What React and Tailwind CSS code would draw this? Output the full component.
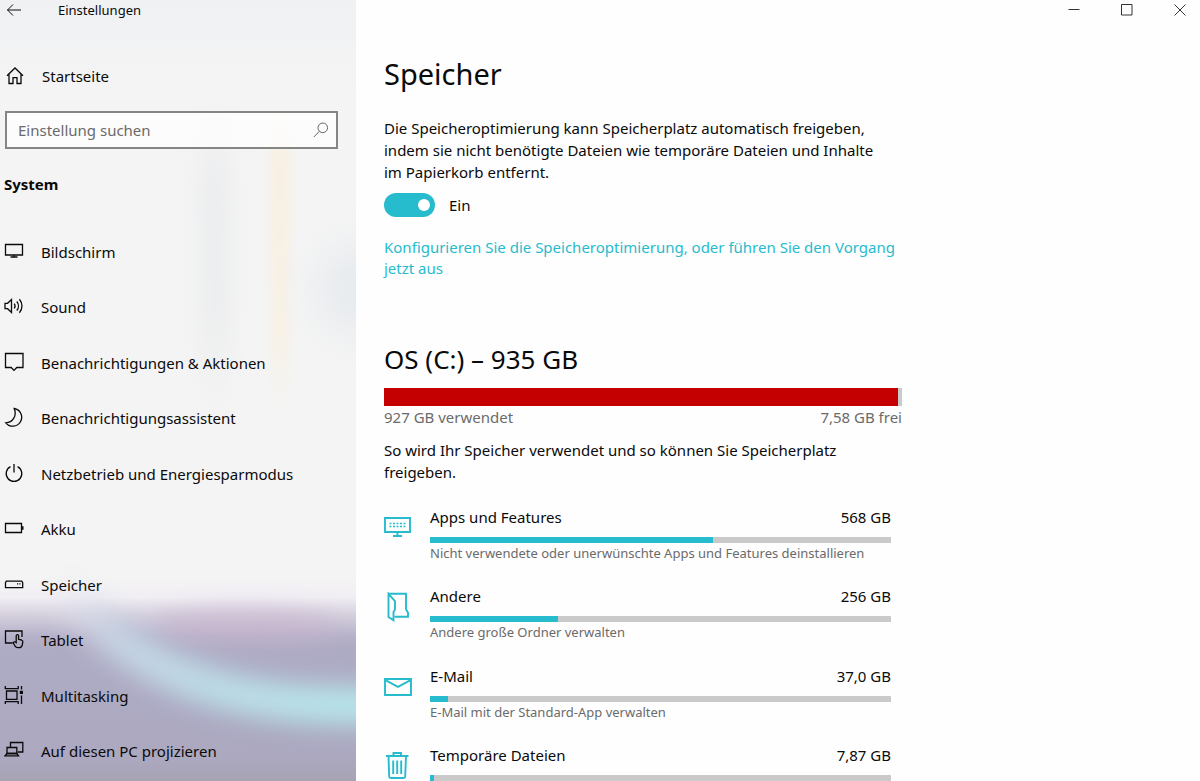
import React from "react";

const line = { fill: "none", stroke: "currentColor", strokeWidth: 1.3 };

function Glyph({ children }) {
  return (
    <svg viewBox="0 0 20 20" className="h-5 w-5 shrink-0" aria-hidden="true" {...line}>
      {children}
    </svg>
  );
}

const navItems = [
  {
    label: "Bildschirm",
    icon: <path d="M1.5 3.500h17v10.500h-17zM10 14v2M6.500 16h7" />,
  },
  {
    label: "Sound",
    icon: (
      <>
        <path d="M1 7.3h2.6L7.5 3.5v13L3.6 12.7H1z" />
        <path d="M10.2 7.600a4 4 0 0 1 0 4.800M12.800 5.500a7 7 0 0 1 0 9M15.400 3.200a10.300 10.300 0 0 1 0 13.600" />
      </>
    ),
  },
  {
    label: "Benachrichtigungen & Aktionen",
    icon: <path d="M1.500 1.500h17.500v14h-6.200l-2.800 2.900-2.800-2.900H1.500z" />,
  },
  {
    label: "Benachrichtigungsassistent",
    icon: <path d="M10.200 1.500a8.900 8.900 0 1 1-8.400 14.300C8.500 15.700 13.300 9 10.200 1.500z" />,
  },
  {
    label: "Netzbetrieb und Energiesparmodus",
    icon: <path d="M10 1v8.500M6.500 3.600a7.800 7.800 0 1 0 7 0" />,
  },
  {
    label: "Akku",
    icon: (
      <>
        <path d="M1.500 5.500h16v9h-16z" />
        <path d="M18.600 8.200v3.600" strokeWidth="1.800" />
      </>
    ),
  },
  {
    label: "Speicher",
    icon: (
      <>
        <path d="M2.300 7.200h15.500l.9 1.400v5H1.500v-5z" />
        <path d="M13 9.800h1.200M15.300 9.800h1.200" />
      </>
    ),
  },
  {
    label: "Tablet",
    icon: (
      <>
        <path d="M8.500 14h-7V2h16.500v6" />
        <path d="M12.200 13.500V6.800a1.200 1.200 0 0 1 2.400 0V10.300l2.900.7c1 .3 1.500 1 1.300 2l-.5 2.800c-.4 1.800-1.500 2.900-3.200 2.900h-1.400c-1.200 0-2-.5-2.600-1.500l-2-3.600c.8-1 1.900-1.100 3.100-.1z" />
      </>
    ),
  },
  {
    label: "Multitasking",
    icon: (
      <>
        <path d="M2.500 6h10.500v8.300H2.500zM1.300 1v2.700h12.900V1M1.300 19v-2.400h12.900V19M17.500 1v3.500M17.500 10.500V19" />
        <path d="M15.800 5.800h3.200v3.200h-3.200z" fill="currentColor" stroke="none" />
      </>
    ),
  },
  {
    label: "Auf diesen PC projizieren",
    icon: (
      <>
        <path d="M6.500 7.500V2.500h12.300v9.500h-5M3 7.500h9.800v6H3z" />
        <path d="M1 15.800h13.500l-1.700-2.300H3z" />
      </>
    ),
  },
];

const categories = [
  {
    name: "Apps und Features",
    size: "568 GB",
    percent: 61.4,
    hint: "Nicht verwendete oder unerwünschte Apps und Features deinstallieren",
    icon: (
      <>
        <path d="M1 5h25v14H1zM13.500 19v3.500M9 23h9" />
        <path d="M5.500 10.500h16M5.500 13.500h16" strokeWidth="1.500" strokeDasharray="2 1.500" />
      </>
    ),
  },
  {
    name: "Andere",
    size: "256 GB",
    percent: 27.7,
    hint: "Andere große Ordner verwalten",
    icon: (
      <>
        <path d="M4.500 1.800H22v15.500l2 3.500v4H10.500" />
        <path d="M4.500 1.800 11 9v8.500L9.500 20v8.200L4.500 25z" />
      </>
    ),
  },
  {
    name: "E-Mail",
    size: "37,0 GB",
    percent: 4,
    hint: "E-Mail mit der Standard-App verwalten",
    icon: <path d="M1 7h26v16H1zM1 7.800l13 7 13-7" />,
  },
  {
    name: "Temporäre Dateien",
    size: "7,87 GB",
    percent: 0.8,
    hint: "",
    icon: (
      <path d="M2 5h22.500M9.500 5V2h7.500v3M4.500 5l.7 20.500q0 1.500 1.500 1.500h13q1.500 0 1.500-1.500L22 5M9.200 9.500v13.500M13.200 9.500v13.500M17.200 9.500v13.500" />
    ),
  },
];

function SidebarArtwork() {
  return (
    <svg
      className="absolute inset-0 h-full w-full"
      viewBox="0 0 356 781"
      preserveAspectRatio="none"
      aria-hidden="true"
    >
      <defs>
        <linearGradient id="base" x1="0" y1="0" x2="0" y2="1">
          <stop offset="0" stopColor="#f0f1f3" />
          <stop offset="0.12" stopColor="#f4f4f4" />
          <stop offset="0.74" stopColor="#f4f4f4" />
          <stop offset="0.765" stopColor="#f1eef4" />
          <stop offset="0.785" stopColor="#d8d3e0" />
          <stop offset="0.815" stopColor="#b5b1c9" />
          <stop offset="0.83" stopColor="#aeabc4" />
          <stop offset="0.97" stopColor="#aba8c0" />
          <stop offset="1" stopColor="#a7a3b3" />
        </linearGradient>
        <linearGradient id="ribbon" gradientUnits="userSpaceOnUse" x1="60" y1="600" x2="330" y2="710">
          <stop offset="0" stopColor="#e3e6f0" stopOpacity="0.2" />
          <stop offset="0.25" stopColor="#c5d3e3" />
          <stop offset="0.6" stopColor="#bcdce7" />
          <stop offset="1" stopColor="#b7e4ea" />
        </linearGradient>
        <linearGradient id="beam" x1="0" y1="0" x2="0" y2="1">
          <stop offset="0" stopColor="#f8f0e2" stopOpacity="0" />
          <stop offset="0.15" stopColor="#f8f0e2" />
          <stop offset="0.75" stopColor="#f7f1e6" />
          <stop offset="1" stopColor="#f7f1e6" stopOpacity="0" />
        </linearGradient>
        <linearGradient id="shade" x1="0" y1="0" x2="0" y2="1">
          <stop offset="0" stopColor="#ecedef" stopOpacity="0" />
          <stop offset="0.3" stopColor="#ebecee" />
          <stop offset="0.7" stopColor="#ecedee" />
          <stop offset="1" stopColor="#ecedee" stopOpacity="0" />
        </linearGradient>
        <filter id="soft" filterUnits="userSpaceOnUse" x="-60" y="0" width="520" height="840">
          <feGaussianBlur stdDeviation="12" />
        </filter>
        <filter id="haze" filterUnits="userSpaceOnUse" x="100" y="100" width="500" height="400">
          <feGaussianBlur stdDeviation="22" />
        </filter>
        <filter id="fine" filterUnits="userSpaceOnUse" x="200" y="80" width="200" height="400">
          <feGaussianBlur stdDeviation="4" />
        </filter>
      </defs>
      <rect width="356" height="781" fill="url(#base)" />
      <rect x="200" y="90" width="30" height="330" fill="url(#shade)" filter="url(#soft)" />
      <rect x="270" y="110" width="20" height="300" fill="url(#beam)" filter="url(#fine)" />
      <ellipse cx="365" cy="290" rx="50" ry="45" fill="#e6eaee" filter="url(#haze)" />
      <ellipse cx="245" cy="626" rx="95" ry="16" fill="#c9b2cd" opacity="0.6" filter="url(#soft)" />
      <path
        d="M60 582C100 638 160 672 215 688C270 704 310 706 400 706"
        fill="none"
        stroke="url(#ribbon)"
        strokeWidth="38"
        filter="url(#soft)"
      />
    </svg>
  );
}

function Sidebar() {
  return (
    <aside className="relative w-[356px] shrink-0 overflow-hidden bg-[#f4f4f4]">
      <SidebarArtwork />
      <div className="relative flex flex-col">
        <header className="flex h-5 items-center gap-[34px] pl-1">
          <button type="button" aria-label="Zurück" className="flex">
            <svg viewBox="0 0 20 20" className="h-5 w-5" aria-hidden="true" {...line}>
              <path d="M17 10H3.500M9 4.500 3.500 10 9 15.500" strokeWidth="1" />
            </svg>
          </button>
          <span className="text-[13px] leading-5">Einstellungen</span>
        </header>
        <a href="#start" className="mt-11 flex h-6 items-center gap-[17px] pl-[5px] text-[15px]">
          <Glyph>
            <path d="M2 9.800 10 2l8 7.800M4 8.200V17.500h4v-5.800h4v5.800h4V8.200" />
          </Glyph>
          Startseite
        </a>
        <label className="ml-[5px] mr-[18px] mt-[23px] flex h-[38px] items-center border-2 border-[#858585] bg-white/70 pl-[11px] pr-[7px]">
          <span className="sr-only">Einstellung suchen</span>
          <input
            type="text"
            placeholder="Einstellung suchen"
            className="h-8 min-w-0 flex-1 bg-transparent text-[15px] leading-8 outline-none placeholder:text-[#6a6a6a]"
          />
          <svg viewBox="0 0 16 16" className="h-4 w-4 text-[#666666]" {...line} strokeWidth="1" aria-hidden="true">
            <circle cx="9.800" cy="5.800" r="4.800" />
            <path d="M6.300 9.300.8 15" />
          </svg>
        </label>
        <h2 className="mt-[23px] pl-1 text-[15px] font-bold leading-6">System</h2>
        <nav className="mt-7 grid min-h-[555px] auto-rows-fr">
          {navItems.map((item) => (
            <a key={item.label} href="#" className="flex items-center gap-[17px] pl-1 text-[15px]">
              <span className="-mt-[2px]">
                <Glyph>{item.icon}</Glyph>
              </span>
              {item.label}
            </a>
          ))}
        </nav>
      </div>
    </aside>
  );
}

function WindowControls() {
  return (
    <div className="flex h-5 justify-end gap-[33px] pr-[10px] text-[#333333]">
      <button type="button" aria-label="Minimieren" className="flex items-center">
        <svg viewBox="0 0 20 20" className="h-5 w-5" {...line} strokeWidth="1">
          <path d="M4.500 9.500h11" />
        </svg>
      </button>
      <button type="button" aria-label="Maximieren" className="flex items-center">
        <svg viewBox="0 0 20 20" className="h-5 w-5" {...line} strokeWidth="1">
          <path d="M4.500 4.500h10.500v10.500h-10.500z" />
        </svg>
      </button>
      <button type="button" aria-label="Schließen" className="flex items-center">
        <svg viewBox="0 0 20 20" className="h-5 w-5" {...line} strokeWidth="1">
          <path d="m4.500 4.500 11 11M15.500 4.500l-11 11" />
        </svg>
      </button>
    </div>
  );
}

function Category({ name, size, percent, hint, icon }) {
  return (
    <li className="flex min-h-[79px] gap-[18px]">
      <svg
        viewBox="0 0 28 30"
        className="mt-2 h-[30px] w-7 shrink-0 text-[#27bccd]"
        {...line}
        strokeWidth="1.900"
        aria-hidden="true"
      >
        {icon}
      </svg>
      <div className="min-w-0 flex-1">
        <div className="flex justify-between text-[15px] leading-6">
          <span>{name}</span>
          <span>{size}</span>
        </div>
        <div className="mt-2 h-[6px] bg-[#cacaca]">
          <div className="h-full bg-[#27bccd]" style={{ width: `${percent}%` }} />
        </div>
        <p className="text-[13px] leading-5 text-[#6b6b6b]">{hint}</p>
      </div>
    </li>
  );
}

export default function App() {
  return (
    <div className="flex h-screen overflow-hidden bg-[#fefefe] font-['Noto_Sans','Open_Sans',sans-serif] text-[#0a0a0a]">
      <Sidebar />
      <main className="min-w-0 flex-1 overflow-hidden">
        <WindowControls />
        <div className="max-w-[546px] pl-7">
          <h1 className="mt-[34px] text-[29px] leading-10">Speicher</h1>
          <p className="mt-[23px] max-w-[505px] text-[15px] leading-[22px]">
            Die Speicheroptimierung kann Speicherplatz automatisch freigeben, indem sie nicht
            benötigte Dateien wie temporäre Dateien und Inhalte im Papierkorb entfernt.
          </p>
          <label className="mt-[10px] flex h-6 items-center gap-[14px] text-[15px]">
            <input type="checkbox" role="switch" defaultChecked className="peer sr-only" />
            <span className="flex h-6 w-[51px] items-center justify-end rounded-full bg-[#27bccd] pr-[5px]">
              <span className="h-3 w-3 rounded-full bg-white" />
            </span>
            Ein
          </label>
          <a href="#konfigurieren" className="mt-5 block text-[15px] leading-[21px] text-[#27bccd]">
            Konfigurieren Sie die Speicheroptimierung, oder führen Sie den Vorgang jetzt aus
          </a>
          <h2 className="mt-[60px] text-[26px] leading-10">OS (C:) – 935 GB</h2>
          <div className="mt-[9px] h-[18px] bg-[#cacaca]">
            <div className="h-full bg-[#c50000]" style={{ width: "99.2%" }} />
          </div>
          <div className="flex justify-between text-[15px] leading-[22px] text-[#6b6b6b]">
            <span>927 GB verwendet</span>
            <span>7,58 GB frei</span>
          </div>
          <p className="mt-[11px] max-w-[480px] text-[15px] leading-[22px]">
            So wird Ihr Speicher verwendet und so können Sie Speicherplatz freigeben.
          </p>
          <ul className="mr-[11px] mt-[22px] grid min-h-[317px] auto-rows-fr">
            {categories.map((category) => (
              <Category key={category.name} {...category} />
            ))}
          </ul>
        </div>
      </main>
    </div>
  );
}
